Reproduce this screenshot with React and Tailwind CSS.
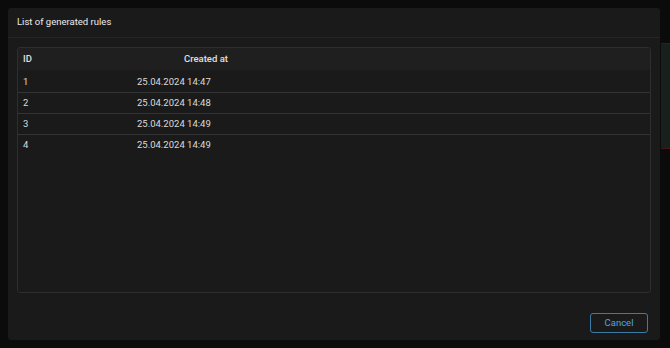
import React from 'react';

const rules = [
  { id: 1, createdAt: '25.04.2024 14:47' },
  { id: 2, createdAt: '25.04.2024 14:48' },
  { id: 3, createdAt: '25.04.2024 14:49' },
  { id: 4, createdAt: '25.04.2024 14:49' },
];

const App = () => {
  return (
    <div
      className="relative w-[670px] h-[348px] bg-[#0b0b0b] overflow-hidden"
      style={{ fontFamily: 'Roboto, "Liberation Sans", sans-serif' }}
    >
      {/* dimmed page behind the dialog */}
      <div className="absolute left-[661px] top-[43px] w-[9px] h-[106px] bg-[#17201c] border-t border-b border-[#4a1414]" />

      <div className="absolute left-[8px] top-[8px] w-[652px] h-[332px] bg-[#1a1a1a] rounded-[3px] flex flex-col">
        {/* Header */}
        <div className="h-[30px] flex items-center px-[9px] border-b border-[#262626] text-[9.5px] text-[#ececec]">
          List of generated rules
        </div>

        {/* Table */}
        <div className="px-[9px] pt-[9px]">
          <div className="h-[246px] border border-[#2e2e2e] rounded-[3px] overflow-hidden">
            <div className="h-[22px] bg-[#1f1f1f] flex items-center text-[9.5px] font-medium text-[#e0e0e0]">
              <div className="w-[119px] pl-[5px]">ID</div>
              <div className="pl-[47px]">Created at</div>
            </div>
            <div className="pt-[2px]">
              {rules.map((rule, i) => (
                <div
                  key={rule.id}
                  className={`h-[21px] flex items-center text-[9.5px] text-[#dadada] ${
                    i < rules.length - 1 ? 'border-b border-[#333333]' : ''
                  }`}
                >
                  <div className="w-[119px] pl-[5px]">{rule.id}</div>
                  <div>{rule.createdAt}</div>
                </div>
              ))}
            </div>
          </div>
        </div>

        {/* Footer */}
        <div className="flex-1 flex items-center justify-end pr-[12px]">
          <button className="w-[58px] h-[20px] border border-[#3b7ca6] rounded-[3px] text-[9.5px] text-[#4ea6e2] flex items-center justify-center mt-[13px]">
            Cancel
          </button>
        </div>
      </div>
    </div>
  );
};

export default App;
